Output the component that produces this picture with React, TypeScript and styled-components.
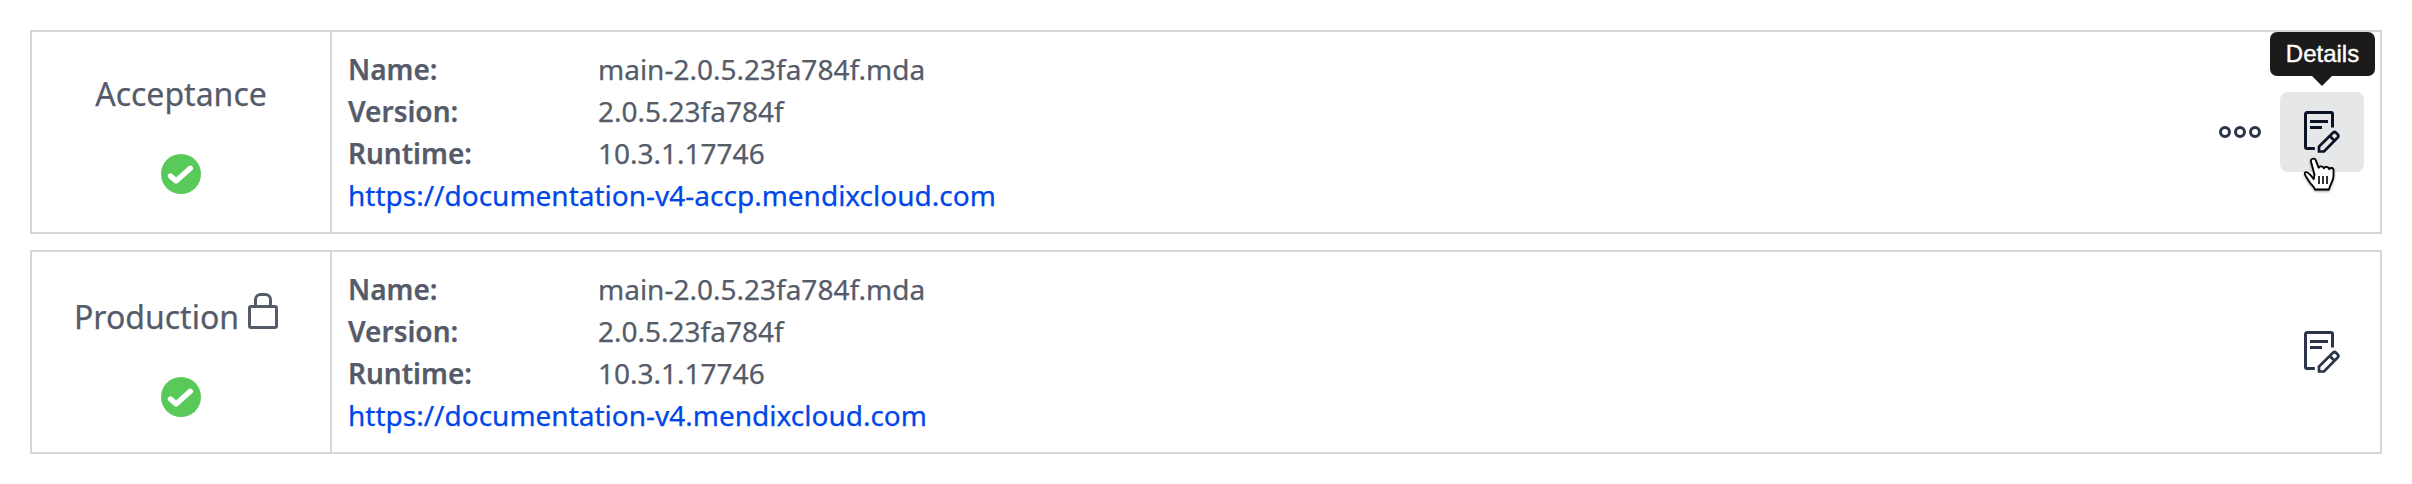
import React from 'react';
import styled, { createGlobalStyle } from 'styled-components';

const GlobalStyle = createGlobalStyle`
  * { box-sizing: border-box; }
  body {
    margin: 0;
    background: #fff;
    color: #555b69;
    font-family: 'Noto Sans', 'Open Sans', sans-serif;
    -webkit-text-stroke: 0.25px currentColor;
  }
`;

const EnvironmentList = styled.main`
  display: flex;
  flex-direction: column;
  gap: 16px;
  padding: 30px;
`;

const Card = styled.section`
  display: flex;
  height: 204px;
  border: 2px solid #d7d7d7;
`;

const Stage = styled.div<{ $offset: number }>`
  display: flex;
  flex-direction: column;
  align-items: center;
  width: 300px;
  padding-top: ${(p) => p.$offset}px;
  border-right: 2px solid #d7d7d7;
`;

const StageName = styled.div`
  display: flex;
  align-items: flex-start;
  height: 44px;
  margin-bottom: 38px;
  font-size: 32px;
  line-height: 44px;
`;

const LockSvg = styled.svg`
  margin: -2px 10px 0 9px;
`;

const Info = styled.div`
  flex: 1;
  padding: 16px;
  font-size: 28px;
  line-height: 42px;
`;

const InfoRow = styled.div`
  display: flex;
`;

const Label = styled.span`
  width: 250px;
  font-weight: 600;
`;

const Link = styled.a`
  display: block;
  color: #0046e8;
  text-decoration: none;
`;

const Actions = styled.div`
  display: flex;
  align-items: center;
  gap: 19px;
  padding-right: 16px;
  color: #2b3448;
`;

const IconButton = styled.button<{ $hovered?: boolean }>`
  position: relative;
  display: flex;
  align-items: center;
  justify-content: center;
  width: 84px;
  height: 80px;
  padding: 0;
  border: 0;
  border-radius: 8px;
  background: ${(p) => (p.$hovered ? '#e6e7e9' : 'transparent')};
  color: ${(p) => (p.$hovered ? '#0a1325' : '#2b3448')};
`;

const Tooltip = styled.span`
  position: absolute;
  left: -10px;
  top: -60px;
  width: 105px;
  height: 44px;
  border-radius: 7px;
  background: #1b1b1b;
  color: #fff;
  font: 24px/43px 'Liberation Sans', Arial, sans-serif;
  -webkit-text-stroke: 0.4px #fff;
  text-align: center;

  &::after {
    content: '';
    position: absolute;
    left: 42px;
    top: 44px;
    border: 10px solid transparent;
    border-top-color: #1b1b1b;
    border-bottom: 0;
  }
`;

const Pointer = styled.svg`
  position: absolute;
  left: 23px;
  top: 65px;
  filter: drop-shadow(0 1px 1px rgba(0, 0, 0, 0.4));
`;

const StatusIcon = () => (
  <svg width="40" height="40" viewBox="0 0 40 40">
    <circle cx="20" cy="20" r="20" fill="#59ca59" />
    <path d="M9.5 22l5.6 5L29.3 14.3" fill="none" stroke="#fff" strokeWidth="5.4" strokeLinecap="round" strokeLinejoin="round" />
  </svg>
);

const LockIcon = () => (
  <LockSvg width="30" height="36" viewBox="0 0 30 36" fill="none" stroke="currentColor" strokeWidth="3">
    <rect x="1.5" y="13.5" width="27" height="21" rx="1.5" />
    <path d="M7.5 13.5V6.5a5 5 0 0 1 5-5h5a5 5 0 0 1 5 5v7" />
  </LockSvg>
);

const MoreIcon = () => (
  <svg width="42" height="12" viewBox="0 0 42 12" fill="none" stroke="currentColor" strokeWidth="3">
    <circle cx="6" cy="6" r="4.5" />
    <circle cx="21" cy="6" r="4.5" />
    <circle cx="36" cy="6" r="4.5" />
  </svg>
);

const DetailsIcon = () => (
  <svg width="36" height="42" viewBox="0 0 36 42" fill="none" stroke="currentColor" strokeWidth="3">
    <path d="M10.8 37.5H3A1.5 1.5 0 0 1 1.5 36V3A1.5 1.5 0 0 1 3 1.5h24A1.5 1.5 0 0 1 28.5 3v13.5M6 10.5h18M6 16.5h12" />
    <path d="M15 40.5v-5L29 21.8q1.5-1.5 3 0l1.7 1.7q1.5 1.5 0 3L20 40.5zM25.8 25l4.7 4.7" strokeWidth="2.7" />
  </svg>
);

const HandPointer = () => (
  <Pointer width="34" height="36" viewBox="0 0 34 36">
    <path
      d="M10.7 22.3L7.2 17.8C5.6 16 3.4 14.7 2.4 15.3C1.2 16.2 1.8 17.5 2.7 18.9L7 25.8C8.5 28 11.5 29.5 11.8 32.5H26C26.3 28.5 30.5 24 30.5 19V13.3C30.5 10.5 26.8 10.3 26.3 12.4C25.8 9.5 21.8 9.2 21 11.5C20.2 9 16.8 8.5 15.6 10.7L12.7 3.1C11.5 .5 7.2 1.6 8 4.7L11.5 17.5z"
      fill="#fff" stroke="#000" strokeWidth="1.8" strokeLinejoin="round"
    />
    <path d="M16 19v8M20 19v8M24 19v8" stroke="#000" strokeWidth="1.6" />
  </Pointer>
);

interface Environment {
  stage: string;
  url: string;
  locked?: boolean;
  active?: boolean;
}

const environments: Environment[] = [
  { stage: 'Acceptance', url: 'https://documentation-v4-accp.mendixcloud.com', active: true },
  { stage: 'Production', url: 'https://documentation-v4.mendixcloud.com', locked: true },
];

const details = [
  ['Name:', 'main-2.0.5.23fa784f.mda'],
  ['Version:', '2.0.5.23fa784f'],
  ['Runtime:', '10.3.1.17746'],
];

export default function App() {
  return (
    <>
      <GlobalStyle />
      <EnvironmentList>
        {environments.map(({ stage, url, locked, active }) => (
          <Card key={stage}>
            <Stage $offset={locked ? 43 : 40}>
              <StageName>
                {stage}
                {locked && <LockIcon />}
              </StageName>
              <StatusIcon />
            </Stage>
            <Info>
              {details.map(([label, value]) => (
                <InfoRow key={label}>
                  <Label>{label}</Label>
                  <span>{value}</span>
                </InfoRow>
              ))}
              <Link>{url}</Link>
            </Info>
            <Actions>
              {active && <MoreIcon />}
              <IconButton $hovered={active}>
                <DetailsIcon />
                {active && <Tooltip>Details</Tooltip>}
                {active && <HandPointer />}
              </IconButton>
            </Actions>
          </Card>
        ))}
      </EnvironmentList>
    </>
  );
}
